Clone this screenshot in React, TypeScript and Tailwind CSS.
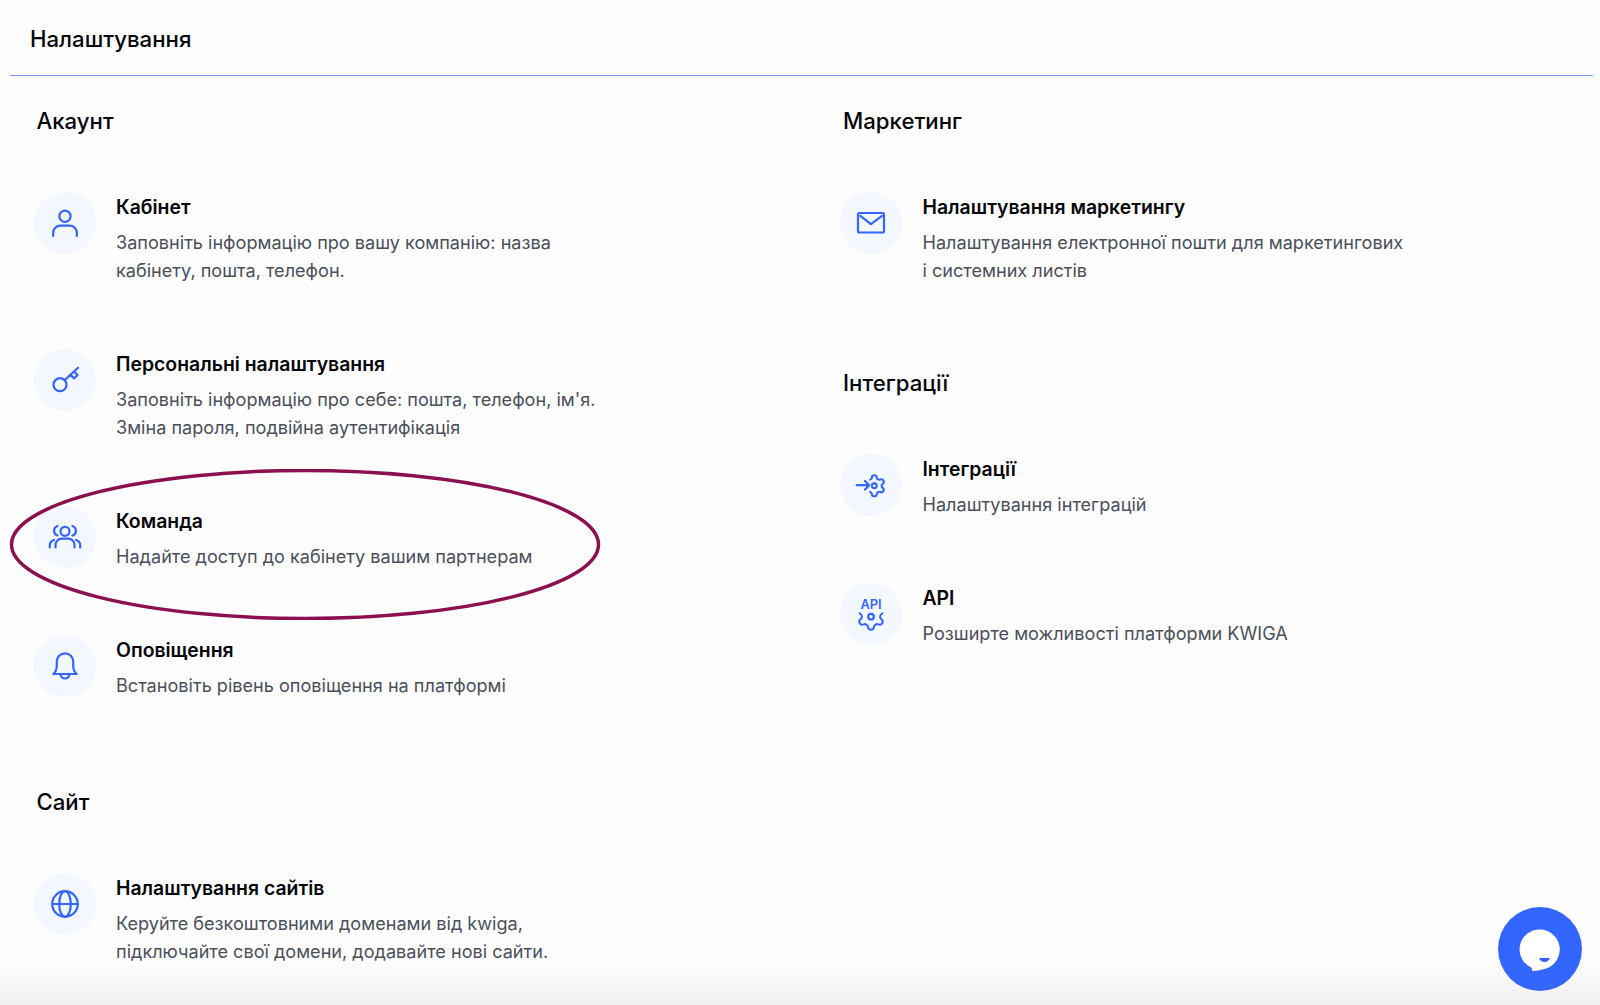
import React from "react";

const GEAR =
  "M9.671 4.136a2.34 2.34 0 0 1 4.659 0 2.34 2.34 0 0 0 3.319 1.915 2.34 2.34 0 0 1 2.33 4.033 2.34 2.34 0 0 0 0 3.831 2.34 2.34 0 0 1-2.33 4.033 2.34 2.34 0 0 0-3.319 1.915 2.34 2.34 0 0 1-4.659 0 2.34 2.34 0 0 0-3.32-1.915 2.34 2.34 0 0 1-2.33-4.033 2.34 2.34 0 0 0 0-3.831A2.34 2.34 0 0 1 6.35 6.051a2.34 2.34 0 0 0 3.32-1.915";

function Svg({ children }: { children: React.ReactNode }) {
  return (
    <svg className="overflow-visible" width="32" height="32" viewBox="0 0 32 32" fill="none" stroke="#3366ff" strokeWidth="2.2" strokeLinecap="round" strokeLinejoin="round">
      {children}
    </svg>
  );
}

const User = () => (
  <Svg>
    <circle cx="16" cy="9.200" r="5.600" />
    <path d="M4.200 29v-3.300a7 7 0 0 1 7-7h9.600a7 7 0 0 1 7 7V29" />
  </Svg>
);
const Key = () => (
  <Svg>
    <circle cx="11" cy="20.700" r="6.500" />
    <path d="M15.800 16 29 3.800M21.500 10.500l3.500 4 3.500-3.500-3-3" />
  </Svg>
);
const Team = () => (
  <Svg>
    <circle cx="16" cy="10.300" r="4.500" />
    <path d="M6.500 26.500V24a6.300 6.300 0 0 1 6.300-6.300h6.400a6.300 6.300 0 0 1 6.300 6.300v2.500" />
    <path d="M8.500 5a5 5 0 0 0 0 9.500M23.500 5a5 5 0 0 1 0 9.500" />
    <path d="M0.800 26.500V25a6 6 0 0 1 4.200-6M31.200 26.500V25a6 6 0 0 0-4.200-6" />
  </Svg>
);
const Bell = () => (
  <Svg>
    <path d="M4.300 24h23.400c-2.300-2-3.500-4-3.500-8.500v-4a8.200 8.200 0 0 0-16.400 0v4c0 4.500-1.200 6.500-3.500 8.500Z" />
    <path d="M11.500 24a4.500 4.500 0 0 0 9 0" />
  </Svg>
);
const Mail = () => (
  <Svg>
    <rect x="3" y="6" width="26" height="19.500" rx="1.500" />
    <path d="M5.300 8.800 16 17.200 27 8.800" />
  </Svg>
);
const Integr = () => (
  <Svg>
    <defs>
      <clipPath id="int-clip">
        <rect x="7.200" y="0" width="20" height="24" />
      </clipPath>
    </defs>
    <g transform="translate(6.700 4.200) scale(1.050)" strokeWidth="2">
      <path d={GEAR} clipPath="url(#int-clip)" />
      <circle cx="12" cy="12" r="2.300" />
    </g>
    <path d="M1.700 16.200H14M10 12l4.200 4.200L10 20.500" />
  </Svg>
);
const Api = () => (
  <Svg>
    <defs>
      <clipPath id="api-clip">
        <rect x="0" y="14.500" width="32" height="20" />
      </clipPath>
    </defs>
    <text x="16" y="11.300" textAnchor="middle" fontFamily="Inter, sans-serif" fontSize="12.800" fontWeight="600" fill="#3366ff" stroke="none">
      API
    </text>
    <g clipPath="url(#api-clip)">
      <g transform="translate(0.400 3.100) scale(1.300)" strokeWidth="1.550">
        <path d={GEAR} />
      </g>
    </g>
    <circle cx="16" cy="18.700" r="2.800" />
  </Svg>
);
const Globe = () => (
  <Svg>
    <circle cx="16" cy="16" r="12.800" />
    <path d="M3.500 16h25" />
    <ellipse cx="16" cy="16" rx="5.800" ry="12.800" />
  </Svg>
);

type ItemProps = {
  icon: React.ReactNode;
  title: string;
  lines: string[];
  className: string;
};

function Item({ icon, title, lines, className }: ItemProps) {
  return (
    <div className={`flex items-start ${className}`}>
      <div className="flex h-[62px] w-[62px] shrink-0 items-center justify-center rounded-full bg-[#f3f7ff]">
        {icon}
      </div>
      <div className="ml-[20px] pt-[1px]">
        <div className="text-[19.400px] font-semibold leading-[28px] text-[#05060a]">{title}</div>
        <div className="mt-[7px] text-[18.100px] leading-[28px] text-[#4b4f5a]">
          {lines.map((l) => (
            <div key={l}>{l}</div>
          ))}
        </div>
      </div>
    </div>
  );
}

function Heading({ children, className }: { children: React.ReactNode; className: string }) {
  return (
    <h2 className={`text-[22.200px] font-medium leading-[30px] text-[#05060a] ${className}`}>{children}</h2>
  );
}

export default function App() {
  return (
    <div className="relative h-[1005px] overflow-hidden bg-[#fdfdfe] font-['Inter',sans-serif]">
      <header className="ml-[10px] mr-[7px] flex h-[76px] items-center border-b border-[#7f9cf9] pt-[2px] pl-[20px]">
        <h1 className="text-[22.200px] font-medium leading-[30px] text-[#05060a]">Налаштування</h1>
      </header>

      <main className="grid grid-cols-[806px_1fr]">
        <section className="pl-[34px] pt-[30px]">
          <Heading className="ml-[2.500px]">Акаунт</Heading>
          <Item
            className="mt-[55.500px]"
            icon={<User />}
            title="Кабінет"
            lines={["Заповніть інформацію про вашу компанію: назва", "кабінету, пошта, телефон."]}
          />
          <Item
            className="mt-[65.500px]"
            icon={<Key />}
            title="Персональні налаштування"
            lines={["Заповніть інформацію про себе: пошта, телефон, ім'я.", "Зміна пароля, подвійна аутентифікація"]}
          />
          <Item
            className="mt-[64.500px]"
            icon={<Team />}
            title="Команда"
            lines={["Надайте доступ до кабінету вашим партнерам"]}
          />
          <Item
            className="mt-[65.500px]"
            icon={<Bell />}
            title="Оповіщення"
            lines={["Встановіть рівень оповіщення на платформі"]}
          />
          <Heading className="ml-[2.500px] mt-[88px]">Сайт</Heading>
          <Item
            className="mt-[55.500px]"
            icon={<Globe />}
            title="Налаштування сайтів"
            lines={["Керуйте безкоштовними доменами від kwiga,", "підключайте свої домени, додавайте нові сайти."]}
          />
        </section>

        <section className="pl-[34px] pt-[30px]">
          <Heading className="ml-[3px]">Маркетинг</Heading>
          <Item
            className="mt-[55.500px] gap-[0.500px]"
            icon={<Mail />}
            title="Налаштування маркетингу"
            lines={["Налаштування електронної пошти для маркетингових", "і системних листів"]}
          />
          <Heading className="ml-[3px] mt-[84.500px]">Інтеграції</Heading>
          <Item
            className="mt-[56px] gap-[0.500px]"
            icon={<Integr />}
            title="Інтеграції"
            lines={["Налаштування інтеграцій"]}
          />
          <Item
            className="mt-[65px] gap-[0.500px]"
            icon={<Api />}
            title="API"
            lines={["Розширте можливості платформи KWIGA"]}
          />
        </section>
      </main>

      <div className="pointer-events-none absolute inset-x-0 bottom-0 h-[45px] bg-gradient-to-b from-[#fdfdfe00] to-[#f0f0f1]" />

      <svg className="pointer-events-none absolute left-[9px] top-[469px]" width="592" height="151" viewBox="0 0 592 151" fill="none">
        <ellipse cx="296" cy="75.500" rx="293.500" ry="74" stroke="#8c0f50" strokeWidth="3.500" />
      </svg>

      <button className="absolute left-[1498px] top-[907px] flex h-[84px] w-[84px] items-center justify-center rounded-full bg-[#3366ff]">
        <svg width="44" height="44" viewBox="0 0 44 44">
          <path d="M22 2.500a20 20 0 0 1 6 39c-4 1.200-8 2-13.500 2.800l-1-3.500A20 20 0 0 1 22 2.500Z" fill="#ffffff" />
          <path d="M21 31h11c-.800 2.800-3 4-5.500 4s-4.700-1.200-5.500-4Z" fill="#3366ff" />
        </svg>
      </button>
    </div>
  );
}
